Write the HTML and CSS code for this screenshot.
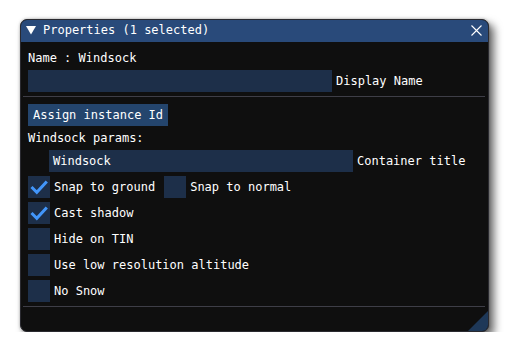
FILE: index.html
```html
<!DOCTYPE html>
<html>
<head>
<meta charset="utf-8">
<link rel="stylesheet" href="styles.css">
</head>
<body>
<div class="window">
  <div class="titlebar">
    <svg class="collapse" width="10" height="9" viewBox="0 0 10 9"><polygon points="0,0 10,0 5,8.5" fill="#fff"/></svg>
    <span class="title">Properties (1 selected)</span>
    <svg class="close" width="11" height="11" viewBox="0 0 11 11"><path d="M0.5 0.5 L10.5 10.5 M10.5 0.5 L0.5 10.5" stroke="#fff" stroke-width="1.1" fill="none"/></svg>
  </div>
  <div class="content">
    <div class="text">Name : Windsock</div>
    <div class="row">
      <div class="input"></div>
      <span class="label">Display Name</span>
    </div>
    <div class="separator"></div>
    <div class="button">Assign instance Id</div>
    <div class="text">Windsock params:</div>
    <div class="row indent">
      <div class="input">Windsock</div>
      <span class="label">Container title</span>
    </div>
    <div class="row">
      <div class="check on"><svg width="22" height="22" viewBox="0 0 22 22"><path d="M3.5 11 L8.8 16.3 L18.8 5.5" stroke="#4296fa" stroke-width="3" fill="none"/></svg></div>
      <span class="label">Snap to ground</span>
      <div class="check second"></div>
      <span class="label">Snap to normal</span>
    </div>
    <div class="row">
      <div class="check on"><svg width="22" height="22" viewBox="0 0 22 22"><path d="M3.5 11 L8.8 16.3 L18.8 5.5" stroke="#4296fa" stroke-width="3" fill="none"/></svg></div>
      <span class="label">Cast shadow</span>
    </div>
    <div class="row">
      <div class="check"></div>
      <span class="label">Hide on TIN</span>
    </div>
    <div class="row">
      <div class="check"></div>
      <span class="label">Use low resolution altitude</span>
    </div>
    <div class="row">
      <div class="check"></div>
      <span class="label">No Snow</span>
    </div>
    <div class="separator last"></div>
  </div>
  <div class="grip"></div>
</div>
</body>
</html>
```
FILE: styles.css
```css
html, body {
  margin: 0;
  padding: 0;
  background: #ffffff;
}
body {
  padding: 19px 0 0 20px;
  font-family: "DejaVu Sans Mono", "Liberation Mono", monospace;
  font-size: 12px;
  color: #ffffff;
}
.window {
  position: relative;
  width: 469px;
  height: 313px;
  box-sizing: border-box;
  background: #0f0f0f;
  border-radius: 7px;
  overflow: hidden;
  box-shadow: 5px 5px 9px rgba(0, 0, 0, 0.6), 0 0 3px rgba(0, 0, 0, 0.3);
  border: 1px solid #2a2a30;
}
.titlebar {
  height: 23px;
  background: #294a7a;
  display: flex;
  align-items: center;
  padding-left: 6px;
  margin: -1px -1px 0 -1px;
}
.title {
  margin-left: 7px;
  line-height: 23px;
  flex: 1;
}
.close {
  margin-right: 7px;
}
.content {
  padding: 8px 3px 0 7px;
  display: flex;
  flex-direction: column;
  gap: 4px;
}
.text {
  height: 16px;
  line-height: 16px;
}
.row {
  display: flex;
  align-items: center;
  height: 22px;
}
.indent {
  padding-left: 21px;
}
.input {
  width: 304px;
  height: 22px;
  line-height: 22px;
  background: #1d2f49;
  padding-left: 4px;
  box-sizing: border-box;
}
.label {
  margin-left: 4px;
  line-height: 22px;
}
.separator {
  height: 1px;
  background: #3e3e47;
  margin: 0 0 3px -5px;
}
.separator.last {
  margin-bottom: 0;
}
.button {
  align-self: flex-start;
  height: 22px;
  line-height: 22px;
  padding: 0 5px 0 5px;
  background: #24456d;
}
.check {
  width: 22px;
  height: 22px;
  background: #1d2f49;
  flex: none;
}
.check svg {
  display: block;
}
.check.second {
  margin-left: 9px;
}
.grip {
  position: absolute;
  right: 0;
  bottom: 0;
  width: 20px;
  height: 20px;
  background: #1e3858;
  clip-path: polygon(100% 0, 100% 100%, 0 100%);
}
```
